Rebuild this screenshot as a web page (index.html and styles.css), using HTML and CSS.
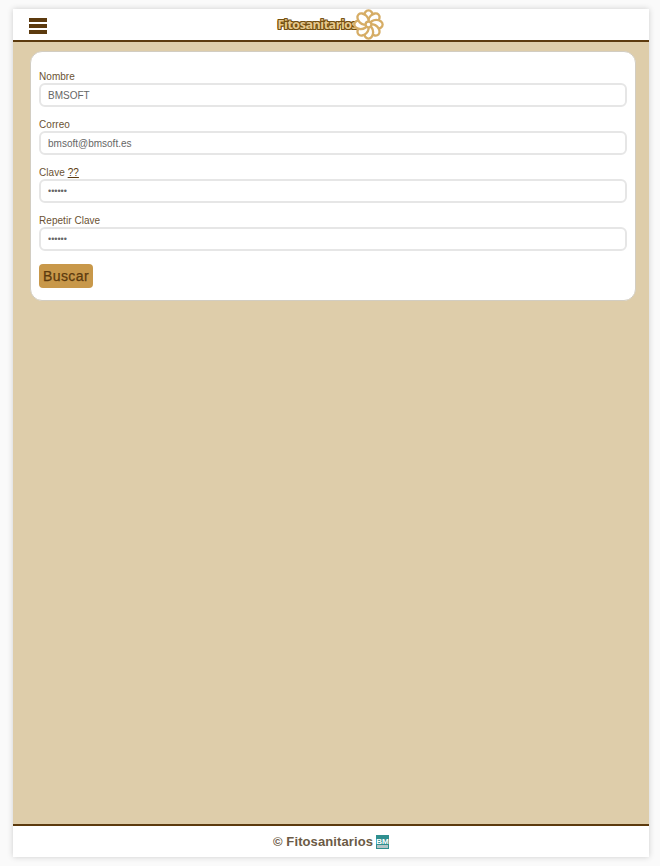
FILE: index.html
```html
<!DOCTYPE html>
<html lang="es">
<head>
  <meta charset="UTF-8" />
  <meta name="viewport" content="width=device-width, initial-scale=1.0" />
  <title>Fitosanitarios</title>
  <link rel="stylesheet" href="styles.css">
</head>
<body>
  <div class="page">
    <header class="top">
      <div class="burger"><span></span><span></span><span></span></div>
      <div class="logo">
        <span class="logo-text">Fitosanitarios</span>
        <svg class="logo-flower" viewBox="0 0 32 32" width="31" height="31">
          <g fill="#fff" stroke="#d6ad66" stroke-width="2.4">
            <ellipse cx="16" cy="8" rx="4.8" ry="6.6"/>
            <ellipse cx="16" cy="8" rx="4.8" ry="6.6" transform="rotate(45 16 16)"/>
            <ellipse cx="16" cy="8" rx="4.8" ry="6.6" transform="rotate(90 16 16)"/>
            <ellipse cx="16" cy="8" rx="4.8" ry="6.6" transform="rotate(135 16 16)"/>
            <ellipse cx="16" cy="8" rx="4.8" ry="6.6" transform="rotate(180 16 16)"/>
            <ellipse cx="16" cy="8" rx="4.8" ry="6.6" transform="rotate(225 16 16)"/>
            <ellipse cx="16" cy="8" rx="4.8" ry="6.6" transform="rotate(270 16 16)"/>
            <ellipse cx="16" cy="8" rx="4.8" ry="6.6" transform="rotate(315 16 16)"/>
            <circle cx="16" cy="16" r="3"/>
          </g>
        </svg>
      </div>
    </header>

    <main class="content">
      <form class="card">
        <div class="field">
          <label>Nombre</label>
          <input type="text" value="BMSOFT">
        </div>
        <div class="field">
          <label>Correo</label>
          <input type="text" value="bmsoft@bmsoft.es">
        </div>
        <div class="field">
          <label>Clave <a href="#">??</a></label>
          <input type="password" value="123456">
        </div>
        <div class="field">
          <label>Repetir Clave</label>
          <input type="password" value="123456">
        </div>
        <button type="button" class="btn">Buscar</button>
      </form>
    </main>

    <footer class="bottom">
      <span>© Fitosanitarios</span>
      <svg class="bm" viewBox="0 0 13 14" width="13" height="14">
        <rect width="13" height="14" fill="#2f8f8f"/>
        <rect x="1" y="10" width="11" height="3" fill="#b4c4c6"/>
        <text x="6.5" y="8.8" text-anchor="middle" font-size="8" font-weight="700" font-family="Liberation Sans" fill="#fff">BM</text>
      </svg>
    </footer>
  </div>
</body>
</html>
```

FILE: styles.css
```css
html, body {
  height: 100%;
}

body {
  margin: 0;
  padding: 9px 11px 9px 13px;
  box-sizing: border-box;
  background: #fafafa;
  color: #5c3a0e;
  font-family: 'Liberation Sans', Arial, sans-serif;
}

.page {
  height: 100%;
  display: flex;
  flex-direction: column;
  background: #decdaa;
  box-shadow: 0 0 6px rgba(0, 0, 0, 0.18);
}

.top {
  position: relative;
  height: 31px;
  flex: none;
  display: flex;
  align-items: center;
  justify-content: center;
  background: #fff;
  border-bottom: 2px solid #5c3a0e;
}

.burger {
  position: absolute;
  left: 16px;
  top: 9px;
  width: 18px;
  display: flex;
  flex-direction: column;
  gap: 2px;
}

.burger span {
  height: 4px;
  background: #5c3a0e;
}

.logo {
  display: flex;
  align-items: center;
}

.logo-text {
  font-family: 'Open Sans', sans-serif;
  font-size: 12.5px;
  font-weight: 700;
  letter-spacing: -0.45px;
  color: #e6c98f;
  text-shadow: 1px 0 0 #74500f, -1px 0 0 #74500f, 0 1px 0 #74500f, 0 -1px 0 #74500f,
    1px 1px 0 #74500f, -1px 1px 0 #74500f, 1px -1px 0 #74500f, -1px -1px 0 #74500f;
}

.logo-flower {
  margin-left: -4px;
}

.content {
  flex: 1;
  padding: 9px 13px 0 17px;
}

.card {
  height: 250px;
  box-sizing: border-box;
  padding: 19px 8px 0;
  background: #fff;
  border: 1px solid #d2cdc2;
  border-radius: 12px;
}

.field {
  margin-bottom: 12px;
}

.field label {
  display: block;
  font-size: 10px;
  line-height: 12px;
  letter-spacing: 0.05px;
  color: #6b5233;
}

.field label a {
  color: #5c3a0e;
}

.field input {
  display: block;
  width: 100%;
  height: 24px;
  box-sizing: border-box;
  padding: 0 7px;
  border: 2px solid #e6e6e6;
  border-radius: 6px;
  background: #fff;
  color: #666;
  font-family: 'Liberation Sans', Arial, sans-serif;
  font-size: 10px;
  outline: none;
}

.field input[type="password"] {
  font-size: 9px;
}

.btn {
  display: block;
  height: 24px;
  width: 54px;
  margin-top: 13px;
  padding: 0;
  border: 0;
  border-radius: 4px;
  background: #c8984a;
  color: #5c3a0e;
  font-family: 'Liberation Sans', Arial, sans-serif;
  font-size: 14px;
  letter-spacing: 0.4px;
  -webkit-text-stroke: 0.25px #5c3a0e;
}

.bottom {
  height: 31px;
  flex: none;
  display: flex;
  align-items: center;
  justify-content: center;
  gap: 3px;
  background: #fff;
  border-top: 2px solid #5c3a0e;
  color: #6b5a45;
  font-size: 13px;
  font-weight: 700;
  letter-spacing: 0.1px;
}
```
